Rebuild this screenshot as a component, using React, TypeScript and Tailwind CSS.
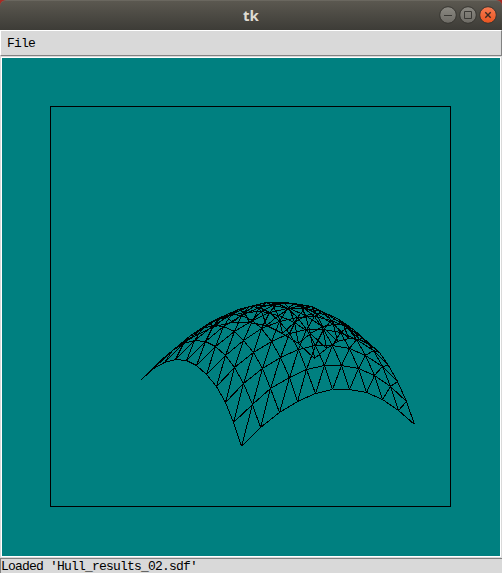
import React from "react";

type Pt = [number, number];

// Parabolic shell: each edge advances by a linearly changing step
// (values in thirds of a pixel, starting at the near corner).
function node(i: number, j: number): Pt {
  const ti = (i * (i - 1)) / 2;
  const tj = (j * (j - 1)) / 2;
  const skew = (i * j) / 100;
  const x = 335.8 - 24.7 * i - 1.2 * ti + 56.3 * j - tj + skew;
  const y = 470.2 - 71.6 * i + 11.4 * ti - 56.5 * j + 11.1 * tj + 4 * skew;
  return [Math.floor(130 + x / 3), Math.floor(290 + y / 3)];
}

function segment(a: Pt, b: Pt): string {
  return `M${a[0] + 0.5} ${a[1] + 0.5}L${b[0] + 0.5} ${b[1] + 0.5}`;
}

const parts: string[] = [];
for (let i = 0; i <= 10; i++) {
  for (let j = 0; j <= 10; j++) {
    const p = node(i, j);
    if (i < 10) parts.push(segment(p, node(i + 1, j)));
    if (j < 10) parts.push(segment(p, node(i, j + 1)));
    if (i < 10 && j < 10) parts.push(segment(p, node(i + 1, j + 1)));
  }
}
const mesh = parts.join("");

function WindowButton({ kind }: { kind: "min" | "max" | "close" }) {
  const close = kind === "close";
  return (
    <svg width="20" height="20" viewBox="0 0 20 20" className="block">
      <defs>
        <linearGradient id={`g-${kind}`} x1="0" y1="0" x2="0" y2="1">
          <stop offset="0" stopColor={close ? "#f67b52" : "#8b8982"} />
          <stop offset="1" stopColor={close ? "#e9541f" : "#6d6b65"} />
        </linearGradient>
      </defs>
      <circle cx="10" cy="10" r="8.3" fill={`url(#g-${kind})`} stroke="#363530" />
      {kind === "min" && <path d="M6 10.5h8" stroke="#3a3935" />}
      {kind === "max" && <path d="M6.5 6.5h7v7h-7z" fill="none" stroke="#3a3935" />}
      {close && <path d="M7.3 7.3l5.4 5.4M12.7 7.3l-5.4 5.4" stroke="#3a2a22" strokeWidth="1.4" />}
    </svg>
  );
}

export default function App() {
  return (
    <div className="flex h-[573px] w-[502px] flex-col overflow-hidden bg-[#d9d9d9] text-black">
      <div className="h-[30px] shrink-0 bg-[#a82b23]">
        <header className="grid h-full grid-cols-[1fr_auto_1fr] items-center rounded-t-[6px] border-t border-[#6a675f] bg-linear-to-b from-[#5b5850] to-[#3d3c37] pb-px">
          <span />
          <h1 className="pb-px font-['Noto_Sans',sans-serif] text-[15px] leading-5 font-bold text-[#dfdbd2]">tk</h1>
          <div className="flex justify-end pr-1">
            <WindowButton kind="min" />
            <WindowButton kind="max" />
            <WindowButton kind="close" />
          </div>
        </header>
      </div>
      <nav className="flex h-[26px] shrink-0 items-center border border-t-white border-r-[#828282] border-b-[#828282] border-l-white bg-[#d9d9d9] pl-[6px]">
        <span className="pt-px font-['Liberation_Mono',monospace] text-[13px] leading-4 tracking-[-0.8px]">File</span>
      </nav>
      <main className="mx-px my-px h-[500px] shrink-0 border border-white bg-[#008080]">
        <svg width="498" height="498" viewBox="2 58 498 498" className="block" shapeRendering="crispEdges">
          <path d="M50.5 106.5h400v400h-400z" fill="none" stroke="black" />
          <path d={mesh} fill="none" stroke="black" />
        </svg>
      </main>
      <footer className="flex flex-1 items-center border-t border-l border-[#828282] pt-px font-['Liberation_Mono',monospace] text-[13px] leading-[14px] tracking-[-0.8px] whitespace-pre">
        Loaded 'Hull_results_02.sdf'
      </footer>
    </div>
  );
}
